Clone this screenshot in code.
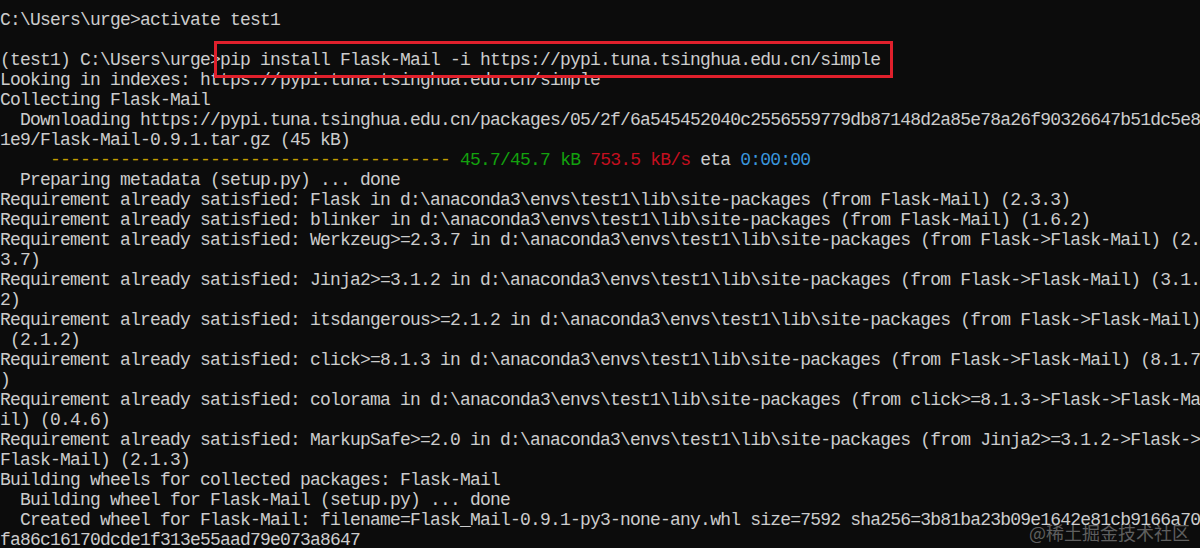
import React from "react";

const rows = [
  "C:\\Users\\urge>activate test1",
  "",
  "(test1) C:\\Users\\urge>pip install Flask-Mail -i https://pypi.tuna.tsinghua.edu.cn/simple",
  "Looking in indexes: https://pypi.tuna.tsinghua.edu.cn/simple",
  "Collecting Flask-Mail",
  "  Downloading https://pypi.tuna.tsinghua.edu.cn/packages/05/2f/6a545452040c2556559779db87148d2a85e78a26f90326647b51dc5e8",
  "1e9/Flask-Mail-0.9.1.tar.gz (45 kB)",
  "__PROGRESS__",
  "  Preparing metadata (setup.py) ... done",
  "Requirement already satisfied: Flask in d:\\anaconda3\\envs\\test1\\lib\\site-packages (from Flask-Mail) (2.3.3)",
  "Requirement already satisfied: blinker in d:\\anaconda3\\envs\\test1\\lib\\site-packages (from Flask-Mail) (1.6.2)",
  "Requirement already satisfied: Werkzeug>=2.3.7 in d:\\anaconda3\\envs\\test1\\lib\\site-packages (from Flask->Flask-Mail) (2.",
  "3.7)",
  "Requirement already satisfied: Jinja2>=3.1.2 in d:\\anaconda3\\envs\\test1\\lib\\site-packages (from Flask->Flask-Mail) (3.1.",
  "2)",
  "Requirement already satisfied: itsdangerous>=2.1.2 in d:\\anaconda3\\envs\\test1\\lib\\site-packages (from Flask->Flask-Mail)",
  " (2.1.2)",
  "Requirement already satisfied: click>=8.1.3 in d:\\anaconda3\\envs\\test1\\lib\\site-packages (from Flask->Flask-Mail) (8.1.7",
  ")",
  "Requirement already satisfied: colorama in d:\\anaconda3\\envs\\test1\\lib\\site-packages (from click>=8.1.3->Flask->Flask-Ma",
  "il) (0.4.6)",
  "Requirement already satisfied: MarkupSafe>=2.0 in d:\\anaconda3\\envs\\test1\\lib\\site-packages (from Jinja2>=3.1.2->Flask->",
  "Flask-Mail) (2.1.3)",
  "Building wheels for collected packages: Flask-Mail",
  "  Building wheel for Flask-Mail (setup.py) ... done",
  "  Created wheel for Flask-Mail: filename=Flask_Mail-0.9.1-py3-none-any.whl size=7592 sha256=3b81ba23b09e1642e81cb9166a70",
  "fa86c16170dcde1f313e55aad79e073a8647",
];

export default function App() {
  return (
    <div className="relative w-[1200px] h-[548px] overflow-hidden bg-[#0c0c0c] text-[#cccccc]">
      <div
        className="pt-[10px] text-[18px] leading-[20px] tracking-[-0.8px] whitespace-pre"
        style={{ fontFamily: '"Liberation Mono", "DejaVu Sans Mono", monospace' }}
      >
        {rows.map((r, i) =>
          r === "__PROGRESS__" ? (
            <div key={i} className="h-[20px]">
              <span>{"     "}</span>
              <span className="text-[#c19c00]">{"----------------------------------------"}</span>
              <span>{" "}</span>
              <span className="text-[#13a10e]">{"45.7/45.7 kB"}</span>
              <span>{" "}</span>
              <span className="text-[#c50f1f]">{"753.5 kB/s"}</span>
              <span>{" eta "}</span>
              <span className="text-[#3a96dd]">{"0:00:00"}</span>
            </div>
          ) : (
            <div key={i} className="h-[20px]">
              {r}
            </div>
          )
        )}
      </div>
      <div className="absolute left-[214px] top-[41px] w-[679px] h-[37px] border-[3px] border-[#e0202c]" />
      <div
        className="absolute right-[10px] bottom-[6px] text-[18px] leading-[20px] text-white/35"
        style={{ fontFamily: '"Noto Sans CJK SC", "Noto Sans", sans-serif' }}
      >
        @稀土掘金技术社区
      </div>
    </div>
  );
}
